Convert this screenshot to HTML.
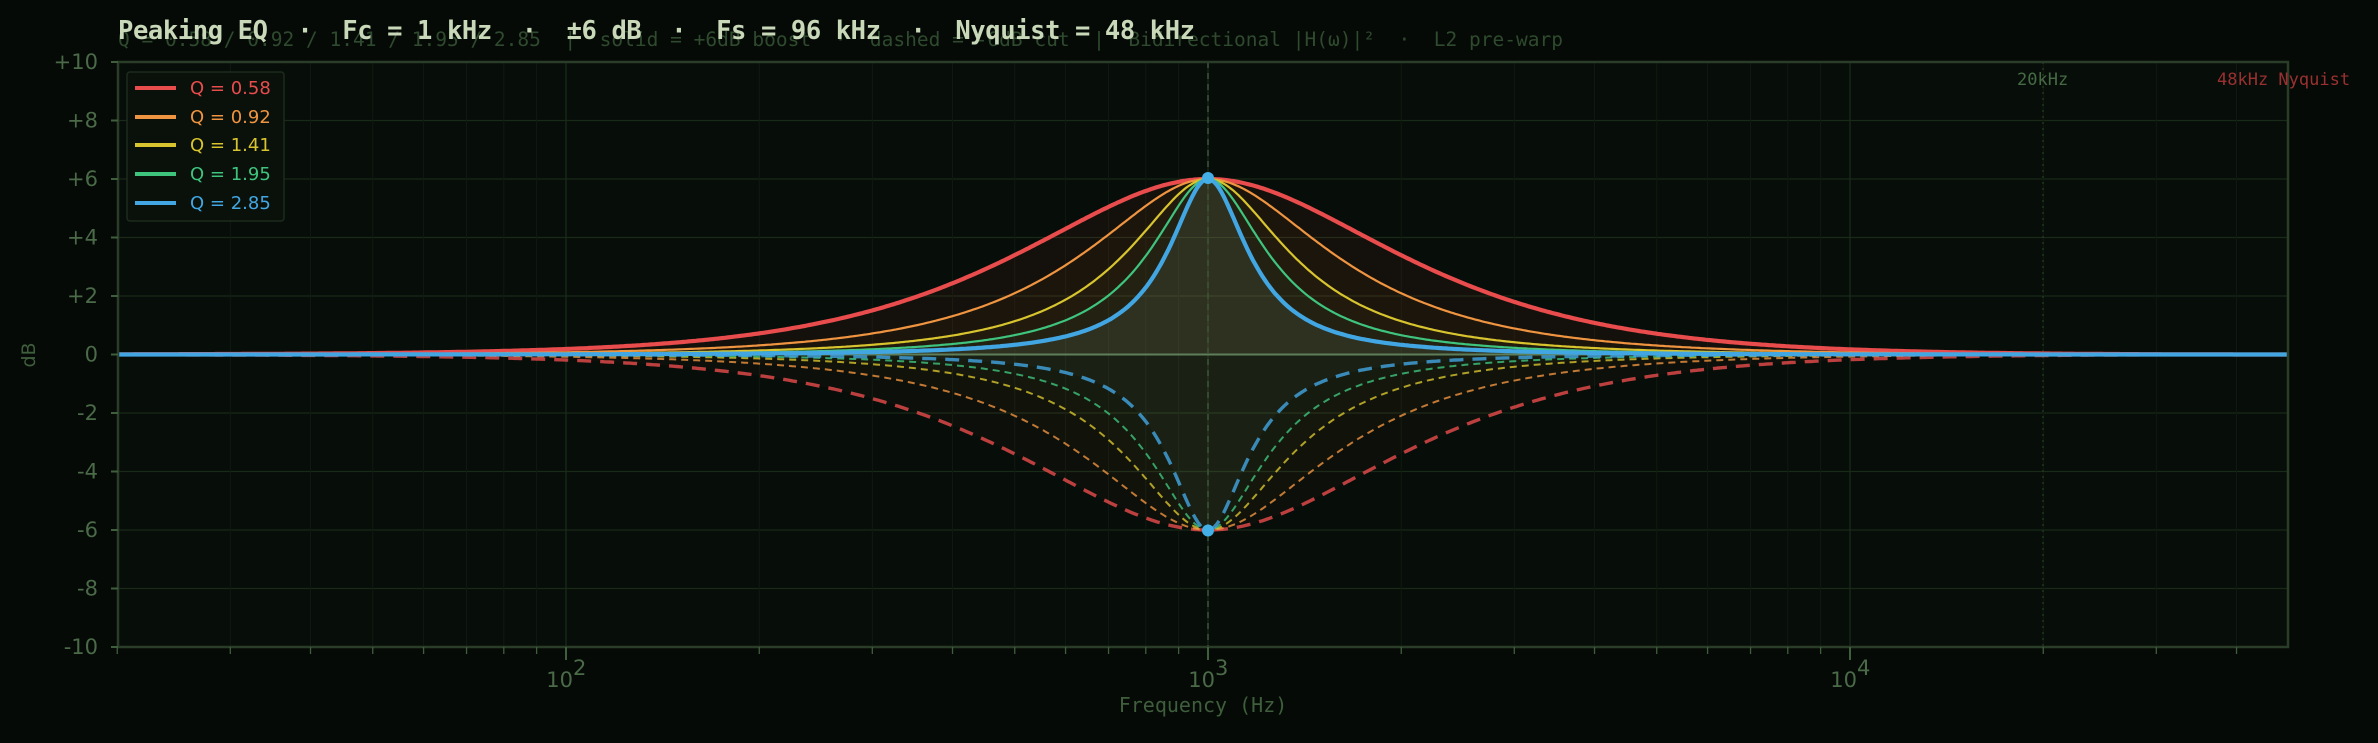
<!DOCTYPE html>
<html><head><meta charset="utf-8"><style>
html,body{margin:0;padding:0;background:#050a06;width:2378px;height:743px;overflow:hidden}
svg{display:block}
text{font-family:"DejaVu Sans","Liberation Sans",sans-serif}
.mono{font-family:"DejaVu Sans Mono","Liberation Mono",monospace}
.tk{fill:#4a6a48;font-size:21px}
</style></head><body>
<svg id="s" width="2378" height="743" xmlns="http://www.w3.org/2000/svg">
<rect width="2378" height="743" fill="#050a06"/>
<rect x="118" y="62" width="2170" height="585" fill="#070d09"/>
<g id="grid"></g>
<g id="fills"></g>
<line x1="118" y1="354.5" x2="2288" y2="354.5" stroke="#5e7e5a" stroke-width="2"/>
<line x1="1208" y1="62" x2="1208" y2="647" stroke="#3d553b" stroke-width="1.5" stroke-dasharray="6,5"/>
<line x1="2043" y1="62" x2="2043" y2="647" stroke="#24401f" stroke-width="1.2" stroke-dasharray="2,4"/>
<g id="curves"></g>
<circle cx="1208" cy="178" r="6" fill="#44aee6"/>
<circle cx="1208" cy="530.5" r="6" fill="#44aee6"/>
<rect x="118" y="62" width="2170" height="585" fill="none" stroke="#2a3d29" stroke-width="2.5"/>
<g id="ticks"></g>
<text x="2017" y="85" class="mono" font-size="17" fill="#466a44">20kHz</text>
<text x="2217" y="85" class="mono" font-size="17" fill="#9a3030">48kHz Nyquist</text>
<text x="118" y="46" class="mono" font-size="19.5" fill="#2f4a2e" textLength="1445" lengthAdjust="spacing" xml:space="preserve">Q = 0.58 / 0.92 / 1.41 / 1.95 / 2.85  |  solid = +6dB boost  ·  dashed = -6dB cut  |  Bidirectional |H(ω)|²  ·  L2 pre-warp</text>
<text x="118" y="39" class="mono" font-size="25.5" font-weight="bold" fill="#c8d8b8" textLength="1077" lengthAdjust="spacing" xml:space="preserve">Peaking EQ  ·  Fc = 1 kHz  ·  ±6 dB  ·  Fs = 96 kHz  ·  Nyquist = 48 kHz</text>
<text x="1203" y="712" text-anchor="middle" font-size="20" fill="#3f5e3c" class="mono">Frequency (Hz)</text>
<text transform="translate(35,355) rotate(-90)" text-anchor="middle" font-size="19" fill="#3f5e3c">dB</text>
<rect x="127" y="72" width="157" height="149" rx="3" fill="#0a110b" stroke="#1e2b1d" stroke-width="1.5"/>
<g id="leg"></g>
</svg>
<script>
var NS="http://www.w3.org/2000/svg";
function el(p,t,a,txt){var e=document.createElementNS(NS,t);for(var k in a)e.setAttribute(k,a[k]);if(txt)e.textContent=txt;document.getElementById(p).appendChild(e);return e;}
function X(f){return 1208+(Math.log10(f)-3)*642;}
function Y(db){return 354.5-db*29.25;}
var g='grid';
for(var d=-8;d<=8;d+=2){el(g,'line',{x1:118,x2:2288,y1:Y(d),y2:Y(d),stroke:'#1a2a19','stroke-width':1.3});}
for(var e=1;e<=4;e++)for(var m=1;m<10;m++){var f=m*Math.pow(10,e);if(f<20||f>48000)continue;var x=X(f);
 if(m==1){el(g,'line',{x1:x,x2:x,y1:62,y2:647,stroke:'#1a2a19','stroke-width':1.3});el('ticks','line',{x1:x,x2:x,y1:647,y2:660,stroke:'#3f5e3c','stroke-width':2});}
 else{el(g,'line',{x1:x,x2:x,y1:62,y2:647,stroke:'#101a10','stroke-width':1});el('ticks','line',{x1:x,x2:x,y1:647,y2:654,stroke:'#3f5e3c','stroke-width':1.3});}}
[[566,'2'],[1208,'3'],[1850,'4']].forEach(function(a){el('ticks','text',{x:a[0]+7,y:687,'text-anchor':'end',class:'tk'},'10');el('ticks','text',{x:a[0]+7,y:675,class:'tk','font-size':14},a[1]);});
for(var d=-10;d<=10;d+=2){el('ticks','line',{x1:111,x2:118,y1:Y(d),y2:Y(d),stroke:'#3f5e3c','stroke-width':2});
 el('ticks','text',{x:98,y:Y(d)+7,'text-anchor':'end',class:'tk'},(d>0?'+':'')+d);}
var Fs=96000,f0=1000,w0=2*Math.PI*f0/Fs;
function mag(Q,G,f){var A=Math.pow(10,G/40),al=Math.sin(w0)/(2*Q),c=Math.cos(w0);
 var b0=1+al*A,b1=-2*c,b2=1-al*A,a0=1+al/A,a1=-2*c,a2=1-al/A;var w=2*Math.PI*f/Fs;
 function H(p0,p1,p2){var re=p0+p1*Math.cos(w)+p2*Math.cos(2*w),im=-p1*Math.sin(w)-p2*Math.sin(2*w);return re*re+im*im;}
 return 10*Math.log10(H(b0,b1,b2)/H(a0,a1,a2));}
var Qs=[0.58,0.92,1.41,1.95,2.85],C=['#e84c4c','#ef9440','#d8c42e','#3fc47e','#42a6e2'],
 fillC=['rgba(200,60,40,0.07)','rgba(200,110,40,0.05)','rgba(170,160,60,0.04)','rgba(70,150,100,0.06)','rgba(110,150,120,0.14)'],
 fillD=['rgba(130,80,40,0.05)','rgba(130,100,40,0.04)','rgba(120,130,60,0.04)','rgba(60,120,80,0.05)','rgba(80,110,90,0.08)'];
function path(Q,G){var p='',lf0=Math.log10(20),lf1=Math.log10(48000);for(var i=0;i<=900;i++){var f=Math.pow(10,lf0+(lf1-lf0)*i/900);p+=(i?'L':'M')+X(f).toFixed(1)+','+Y(mag(Q,G,f)).toFixed(1);}return p;}
for(var i=0;i<5;i++){var pb=path(Qs[i],6),pc=path(Qs[i],-6);
 el('fills','path',{d:pb+'L2288,354.5L118,354.5Z',fill:fillC[i]});
 el('fills','path',{d:pc+'L2288,354.5L118,354.5Z',fill:fillD[i]});}
for(var i=0;i<5;i++){var w=(i==0||i==4)?3.4:2;
 el('curves','path',{d:path(Qs[i],-6),fill:'none',stroke:C[i],'stroke-width':w,'stroke-dasharray':(i==0||i==4)?'14,9':'7,5',opacity:0.8});}
for(var i=0;i<5;i++){var w=(i==0||i==4)?4.2:2.2;
 el('curves','path',{d:path(Qs[i],6),fill:'none',stroke:C[i],'stroke-width':w});}
var ly=[88,117,145,174,203];
for(var i=0;i<5;i++){el('leg','line',{x1:135,x2:176,y1:ly[i],y2:ly[i],stroke:C[i],'stroke-width':4});
 el('leg','text',{x:190,y:ly[i]+6,fill:C[i],'font-size':18},'Q = '+Qs[i].toFixed(2));}
</script>
</body></html>
